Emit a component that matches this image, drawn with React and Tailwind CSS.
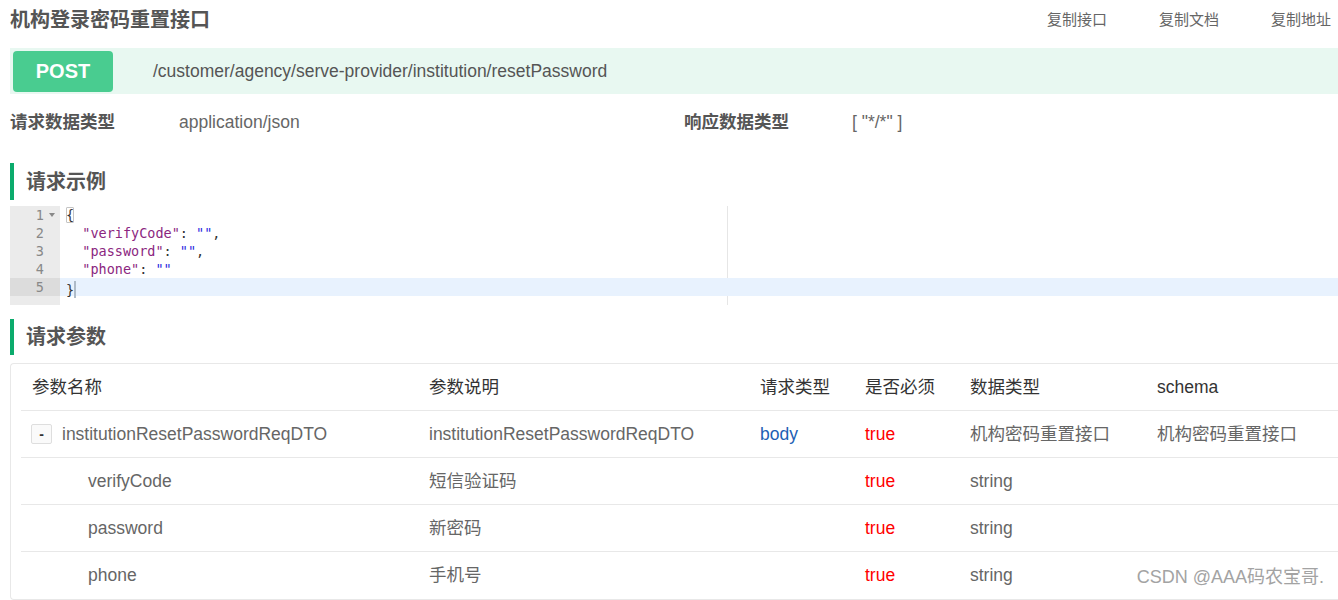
import React from 'react';

const sans = "font-['Liberation_Sans','Noto_Sans_CJK_SC',sans-serif]";

const codeLines = [
  [{ t: '{', c: 'text-[#333]', box: true }],
  [{ t: '  ' }, { t: '"verifyCode"', c: 'text-[#8b2680]' }, { t: ': ', c: 'text-[#333]' }, { t: '""', c: 'text-[#2a2ae0]' }, { t: ',', c: 'text-[#333]' }],
  [{ t: '  ' }, { t: '"password"', c: 'text-[#8b2680]' }, { t: ': ', c: 'text-[#333]' }, { t: '""', c: 'text-[#2a2ae0]' }, { t: ',', c: 'text-[#333]' }],
  [{ t: '  ' }, { t: '"phone"', c: 'text-[#8b2680]' }, { t: ': ', c: 'text-[#333]' }, { t: '""', c: 'text-[#2a2ae0]' }],
  [{ t: '}', c: 'text-[#333]', cursor: true }],
];

const cols = ['w-[397px]', 'w-[331px]', 'w-[105px]', 'w-[105px]', 'w-[187px]', 'flex-1'];

const rows = [
  { name: 'institutionResetPasswordReqDTO', desc: 'institutionResetPasswordReqDTO', in: 'body', req: 'true', type: '机构密码重置接口', schema: '机构密码重置接口', parent: true },
  { name: 'verifyCode', desc: '短信验证码', in: '', req: 'true', type: 'string', schema: '' },
  { name: 'password', desc: '新密码', in: '', req: 'true', type: 'string', schema: '' },
  { name: 'phone', desc: '手机号', in: '', req: 'true', type: 'string', schema: '' },
];

function SectionTitle({ children, className }) {
  return (
    <div className={`ml-[10px] flex items-center border-l-4 border-[#0bab6c] pl-[12px] text-[20px] font-bold text-[#555] ${className}`}>
      {children}
    </div>
  );
}

export default function App() {
  return (
    <div className={`relative h-[600px] w-[1338px] overflow-hidden bg-white ${sans}`}>
      {/* Header */}
      <div className="flex h-[40px] items-center pl-[10px]">
        <h1 className="text-[20px] font-bold text-[#555]">机构登录密码重置接口</h1>
        <div className="ml-auto flex gap-[52px] pr-[7px] text-[15px] text-[#666]">
          <span>复制接口</span>
          <span>复制文档</span>
          <span>复制地址</span>
        </div>
      </div>

      {/* Method + path */}
      <div className="ml-[10px] mt-[8px] flex h-[46px] items-center bg-[#e8f8f1] pl-[3px]">
        <div className="flex h-[41px] w-[100px] items-center justify-center rounded-[4px] bg-[#49cc90] text-[20px] font-bold text-white">
          POST
        </div>
        <span className="ml-[40px] text-[17.5px] text-[#555]">/customer/agency/serve-provider/institution/resetPassword</span>
      </div>

      {/* Content types */}
      <div className="flex h-[56px] items-center pl-[10px] text-[17.5px]">
        <span className="w-[169px] font-bold text-[#555]">请求数据类型</span>
        <span className="w-[505px] text-[#666]">application/json</span>
        <span className="w-[168px] font-bold text-[#555]">响应数据类型</span>
        <span className="text-[#666]">[ "*/*" ]</span>
      </div>

      <SectionTitle className="mt-[13px] h-[37px]">请求示例</SectionTitle>

      {/* Code editor */}
      <div className="ml-[10px] mt-[6px] flex h-[99px] font-['DejaVu_Sans_Mono',monospace] text-[13.5px] leading-[18px]">
        <div className="w-[50px] bg-[#ebebeb] text-[#888]">
          {codeLines.map((_, i) => (
            <div key={i} className={`relative h-[18px] pr-[16px] text-right ${i === 4 ? 'bg-[#dcdcdc]' : ''}`}>
              {i + 1}
              {i === 0 && (
                <svg className="absolute right-[5px] top-[7px]" width="6" height="4" viewBox="0 0 6 4">
                  <path d="M0 0h6L3 4z" fill="#888" />
                </svg>
              )}
            </div>
          ))}
        </div>
        <div className="relative flex-1 pl-[6px]">
          <div className="absolute bottom-0 left-[667px] top-0 w-px bg-[#e6e6e6]" />
          {codeLines.map((line, i) => (
            <div key={i} className={`relative h-[18px] whitespace-pre ${i === 4 ? '-ml-[6px] bg-[#e8f2fe] pl-[6px]' : ''}`}>
              {line.map((s, j) => (
                <span
                  key={j}
                  className={`${s.c || ''} ${s.box ? 'outline outline-1 outline-[#c4c4c4] -outline-offset-1 rounded-[1px]' : ''}`}
                >
                  {s.t}
                </span>
              ))}
              {line.some((s) => s.cursor) && (
                <span className="inline-block h-[17px] w-[2px] translate-y-[3px] bg-[#aebbc8]" />
              )}
            </div>
          ))}
        </div>
      </div>

      <SectionTitle className="mt-[14px] h-[36px]">请求参数</SectionTitle>

      {/* Params table */}
      <div className="ml-[10px] mt-[8px] rounded-l-[4px] border border-r-0 border-[#e8e8e8] pl-[10px] text-[17.5px]">
        <div className="flex h-[47px] items-center border-b border-[#e8e8e8] text-[#333]">
          {['参数名称', '参数说明', '请求类型', '是否必须', '数据类型', 'schema'].map((h, i) => (
            <div key={h} className={`${cols[i]} pl-[11px]`}>{h}</div>
          ))}
        </div>
        {rows.map((r, i) => (
          <div key={r.name} className={`flex h-[47px] items-center text-[#666] ${i < rows.length - 1 ? 'border-b border-[#e8e8e8]' : ''}`}>
            <div className={`${cols[0]} flex items-center ${r.parent ? 'pl-[10px]' : 'pl-[67px]'}`}>
              {r.parent && (
                <span className="mr-[10px] flex h-[20px] w-[21px] items-center justify-center rounded-[2px] border border-[#dedede] bg-[#fafafa] text-[14px] font-bold leading-none text-[#333]">
                  -
                </span>
              )}
              {r.name}
            </div>
            <div className={`${cols[1]} pl-[11px]`}>{r.desc}</div>
            <div className={`${cols[2]} pl-[11px] text-[#1e5fb4]`}>{r.in}</div>
            <div className={`${cols[3]} pl-[11px] text-[#ff0000]`}>{r.req}</div>
            <div className={`${cols[4]} pl-[11px]`}>{r.type}</div>
            <div className={`${cols[5]} pl-[11px]`}>{r.schema}</div>
          </div>
        ))}
      </div>

      {/* Watermark */}
      <div className="pointer-events-none absolute bottom-[9px] right-[14px] text-[18px] text-[#a3a3a3] [text-shadow:0_0_2px_#fff]">
        CSDN @AAA码农宝哥.
      </div>
    </div>
  );
}
